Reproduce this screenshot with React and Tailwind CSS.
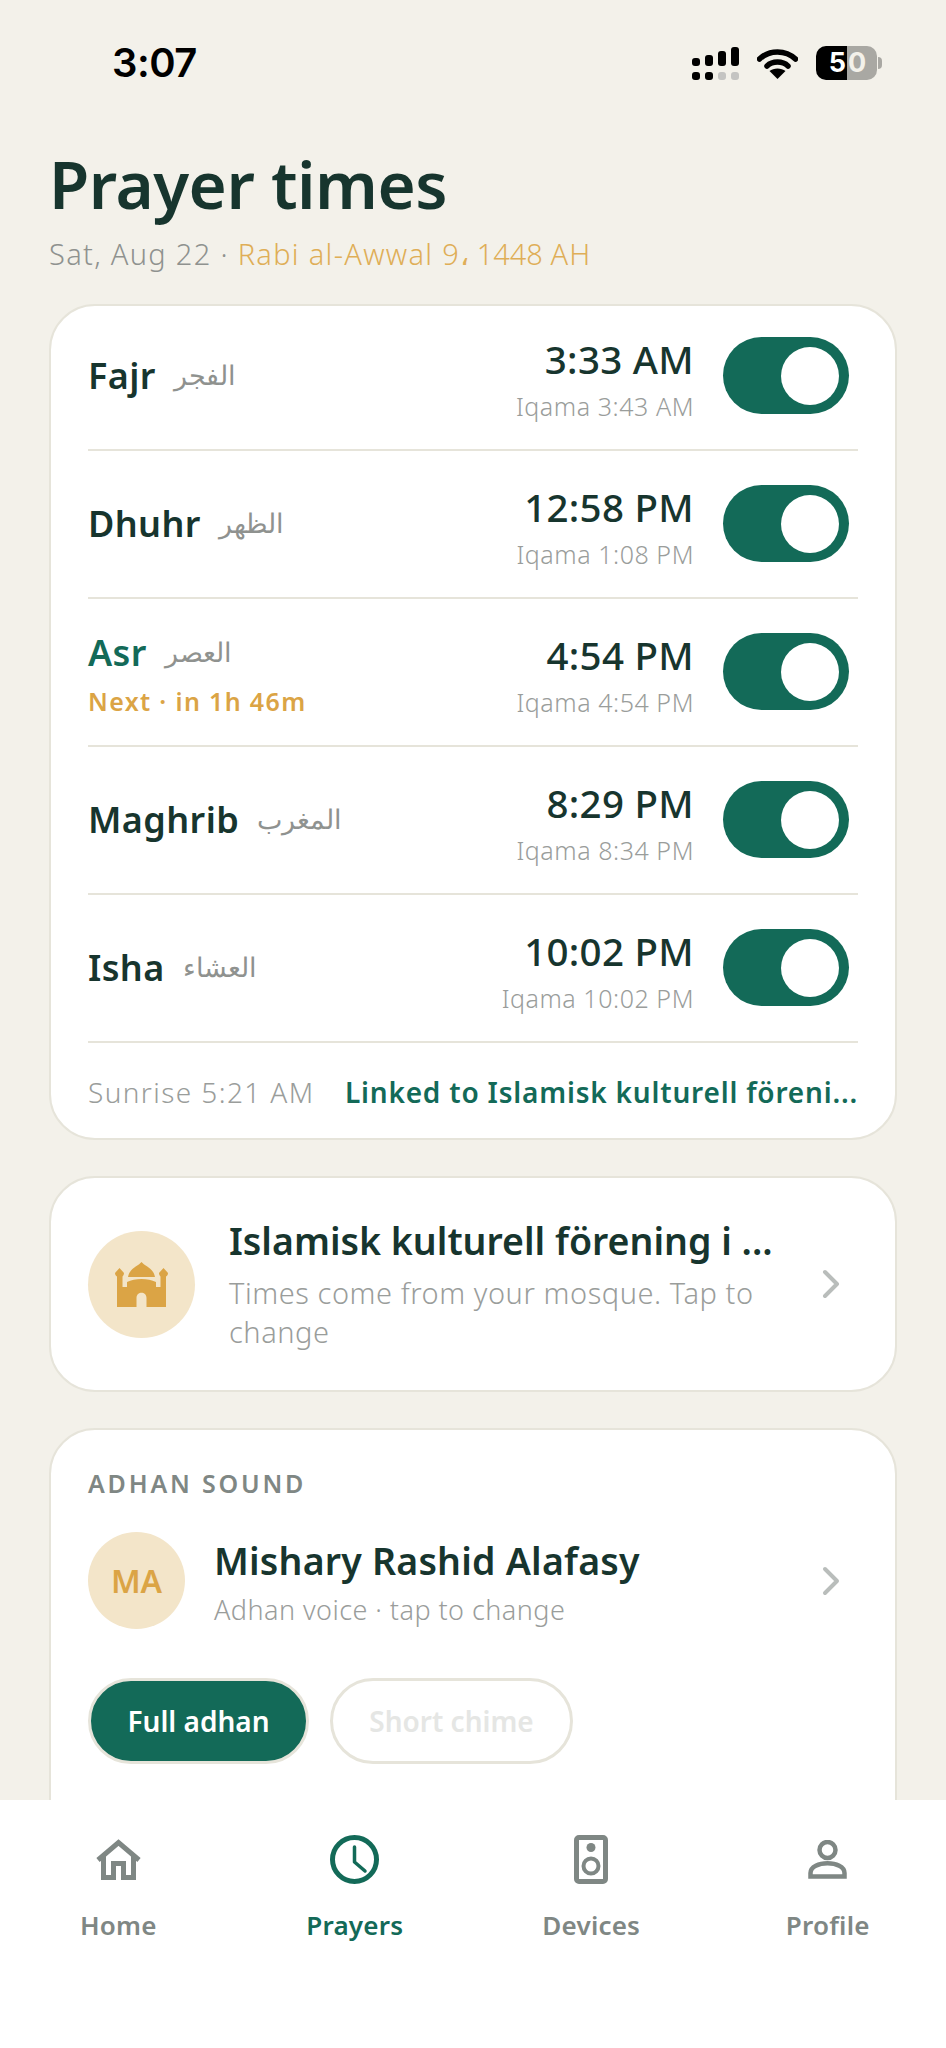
import React from "react";

const prayers = [
  { name: "Fajr", arabic: "الفجر", time: "3:33 AM", iqama: "Iqama 3:43 AM" },
  { name: "Dhuhr", arabic: "الظهر", time: "12:58 PM", iqama: "Iqama 1:08 PM" },
  { name: "Asr", arabic: "العصر", time: "4:54 PM", iqama: "Iqama 4:54 PM", next: "Next · in 1h 46m" },
  { name: "Maghrib", arabic: "المغرب", time: "8:29 PM", iqama: "Iqama 8:34 PM" },
  { name: "Isha", arabic: "العشاء", time: "10:02 PM", iqama: "Iqama 10:02 PM" },
];

function StatusBar() {
  return (
    <div className="flex items-center justify-between h-[34px] mt-[46px] pl-[112px] pr-[64px]">
      <span className="font-['Inter',sans-serif] text-[40px] font-semibold leading-none text-black tracking-[-0.5px]">3:07</span>
      <div className="flex items-center">
        <svg width="47" height="33" viewBox="0 0 47 33" className="mr-[18px]">
          <rect x="0" y="11" width="8" height="8" rx="3" fill="#000" />
          <rect x="13" y="8" width="8" height="11" rx="3" fill="#000" />
          <rect x="26" y="4" width="8" height="15" rx="3" fill="#000" />
          <rect x="39" y="0" width="8" height="19" rx="3" fill="#000" />
          <rect x="0" y="25" width="8" height="8" rx="3" fill="#000" />
          <rect x="13" y="25" width="8" height="8" rx="3" fill="#000" />
          <rect x="26" y="25" width="8" height="8" rx="3" fill="#c4c4c2" />
          <rect x="39" y="25" width="8" height="8" rx="3" fill="#c4c4c2" />
        </svg>
        <svg width="41" height="31" viewBox="0 0 41 31" className="mr-[18px]">
          <path d="M2.5 11 C12.5 1.5 28.5 1.5 38.5 11" fill="none" stroke="#000" strokeWidth="5.5" strokeLinecap="round" />
          <path d="M10 18 C15.5 12.8 25.5 12.8 31 18" fill="none" stroke="#000" strokeWidth="5.5" strokeLinecap="round" />
          <path d="M20.5 31 L12.5 23 C16.5 19.6 24.5 19.6 28.5 23 Z" fill="#000" />
        </svg>
        <div className="flex h-[34px] w-[61px] overflow-hidden rounded-[10px] font-['Inter',sans-serif] text-[27px] font-bold leading-[34px]">
          <span className="w-[31px] bg-black text-white text-right pr-[1px]">5</span>
          <span className="flex-1 bg-[#a9a8a3] text-[#f3f1ea] pl-[1px]">0</span>
        </div>
        <div className="ml-[1px] h-[12px] w-[4px] rounded-r-full bg-[#a9a8a3]" />
      </div>
    </div>
  );
}

function Toggle() {
  return (
    <div className="flex h-[77px] w-[126px] shrink-0 items-center justify-end rounded-full bg-[#136a58] pr-[10px]">
      <div className="h-[58px] w-[58px] rounded-full bg-white" />
    </div>
  );
}

function PrayerRow({ prayer }) {
  const isNext = Boolean(prayer.next);
  return (
    <div className="flex items-start border-b-2 border-[#e6e4da] pb-[35px] pr-[9px]">
      <div className={`flex-1 ${isNext ? "-mt-[2px]" : "self-center"}`}>
        <div className="flex items-center">
          <span className={`text-[36px] font-semibold leading-[44px] tracking-[0.4px] ${isNext ? "text-[#136a58]" : "text-[#17352e]"}`}>
            {prayer.name}
          </span>
          <span dir="rtl" className="ml-[18px] font-['DejaVu_Sans',serif] text-[27px] font-light leading-[44px] text-[#8f928f]">
            {prayer.arabic}
          </span>
        </div>
        {isNext && (
          <div className="mt-[10px] h-[23px] text-[25px] font-semibold leading-[33px] tracking-[1.35px] text-[#dba445]">{prayer.next}</div>
        )}
      </div>
      <div className="mr-[29px] h-[77px] text-right">
        <div className="text-[38.5px] font-medium leading-[44px] tracking-[0.3px] text-[#17352e]">{prayer.time}</div>
        <div className="mt-[9px] text-[25px] font-light leading-[32px] tracking-[0.55px] text-[#9a9d9b]">{prayer.iqama}</div>
      </div>
      <Toggle />
    </div>
  );
}

function Chevron() {
  return (
    <svg width="18" height="30" viewBox="0 0 18 30" className="shrink-0" fill="none" stroke="#b9bdbb" strokeWidth="4" strokeLinecap="round" strokeLinejoin="round">
      <path d="M3 3 L15 15 L3 27" />
    </svg>
  );
}

function MosqueIcon() {
  return (
    <svg width="53" height="45" viewBox="0 0 53 45" fill="#dba445">
      <path d="M26.5 0 C29.5 4 38.5 6 40 15 H13 C14.5 6 23.5 4 26.5 0 Z" />
      <path
        fillRule="evenodd"
        d="M4.5 6 L9 11 C9 13 8 14 7.5 14.5 V25 H12 V20 C20 16 33 16 41 20 V25 H45.5 V14.5 C45 14 44 13 44 11 L48.5 6 L53 11 C53 13 52 14 51 14.5 V45 H2 V14.5 C1 14 0 13 0 11 Z M21.5 45 H31.5 V36 C31.5 29 21.5 29 21.5 36 Z"
      />
    </svg>
  );
}

function NavItem({ label, active, children }) {
  return (
    <div className="flex flex-1 flex-col items-center">
      <div className="flex h-[50px] items-center justify-center">{children}</div>
      <span className={`mt-[24px] text-[26px] font-semibold leading-[34px] tracking-[0.2px] ${active ? "text-[#136a58]" : "text-[#7f8784]"}`}>
        {label}
      </span>
    </div>
  );
}

export default function App() {
  return (
    <div className="flex h-[2048px] w-[946px] flex-col overflow-hidden bg-[#f3f1ea] font-['Noto_Sans',sans-serif]">
      <div className="min-h-0 flex-1 overflow-hidden">
        <StatusBar />

        <div className="px-[49px]">
          <h1 className="mt-[62px] text-[65.5px] font-semibold leading-[84px] tracking-[-0.5px] text-[#17352e]">Prayer times</h1>
          <p className="mt-[8px] text-[29px] font-light leading-[40px] tracking-[1.3px] text-[#8f928f]">
            Sat, Aug 22 · <span className="text-[#dfae57]">Rabi al-Awwal 9، 1448 AH</span>
          </p>

          {/* Prayer list */}
          <section className="mt-[30px] flex flex-col gap-[34px] rounded-[46px] border-2 border-[#e6e4da] bg-white px-[37px] pt-[31px] pb-[31px]">
            {prayers.map((p) => (
              <PrayerRow key={p.name} prayer={p} />
            ))}
            <div className="flex items-center justify-between leading-[30px]">
              <span className="text-[28px] font-light tracking-[1.4px] text-[#9a9d9b]">Sunrise 5:21 AM</span>
              <span className="text-[28px] font-semibold tracking-[0.8px] text-[#136a58]">Linked to Islamisk kulturell föreni...</span>
            </div>
          </section>

          {/* Mosque */}
          <section className="mt-[36px] flex h-[216px] items-center rounded-[46px] border-2 border-[#e6e4da] bg-white pl-[37px] pr-[55px]">
            <div className="flex h-[107px] w-[107px] shrink-0 items-center justify-center rounded-full bg-[#f3e5c9]">
              <MosqueIcon />
            </div>
            <div className="ml-[34px] flex-1">
              <div className="text-[37.5px] font-semibold leading-[48px] text-[#17352e]">Islamisk kulturell förening i ...</div>
              <div className="mt-[8px] text-[29px] font-light leading-[39px] tracking-[0.55px] text-[#9a9d9b]">
                Times come from your mosque. Tap to<br />change
              </div>
            </div>
            <Chevron />
          </section>

          {/* Adhan sound */}
          <section className="mt-[36px] h-[500px] rounded-[46px] border-2 border-[#e6e4da] bg-white pl-[37px] pr-[55px] pt-[36px]">
            <div className="text-[25px] font-semibold leading-[34px] tracking-[2.8px] text-[#7f8784]">ADHAN SOUND</div>
            <div className="mt-[32px] flex items-center">
              <div className="flex h-[97px] w-[97px] shrink-0 items-center justify-center rounded-full bg-[#f3e5c9] text-[32px] font-semibold text-[#dba445]">
                MA
              </div>
              <div className="ml-[29px] flex-1 pt-[4px]">
                <div className="text-[37.5px] font-semibold leading-[48px] tracking-[0.2px] text-[#17352e]">Mishary Rashid Alafasy</div>
                <div className="mt-[6px] text-[27px] font-light leading-[38px] tracking-[0.45px] text-[#9a9d9b]">Adhan voice · tap to change</div>
              </div>
              <Chevron />
            </div>
            <div className="mt-[49px] flex gap-[21px]">
              <div className="flex h-[86px] w-[221px] items-center justify-center rounded-full border-[3px] border-[#e6e4da] bg-[#136a58] text-[28px] font-semibold text-white">
                Full adhan
              </div>
              <div className="flex h-[86px] w-[243px] items-center justify-center rounded-full border-[3px] border-[#e6e4da] bg-white text-[28px] font-semibold text-[#e5e6e4]">
                Short chime
              </div>
            </div>
          </section>
        </div>
      </div>

      {/* Bottom nav */}
      <nav className="flex h-[248px] shrink-0 bg-white pt-[34px]">
        <NavItem label="Home">
          <svg width="47" height="41" viewBox="0 0 47 41" fill="none" stroke="#7f8784" strokeWidth="5">
            <path d="M3 21 L23.5 3.5 L44 21 M8.5 17 V38.5 H18.5 V24.5 H28.5 V38.5 H38.5 V17" />
          </svg>
        </NavItem>
        <NavItem label="Prayers" active>
          <svg width="49" height="49" viewBox="0 0 49 49" fill="none" stroke="#136a58" strokeLinecap="round">
            <circle cx="24.5" cy="24.5" r="22" strokeWidth="5" />
            <path d="M24.5 12 V27 L35 36" strokeWidth="3.5" strokeLinejoin="round" />
          </svg>
        </NavItem>
        <NavItem label="Devices">
          <svg width="34" height="49" viewBox="0 0 34 49" fill="none" stroke="#7f8784">
            <rect x="2.5" y="2.5" width="29" height="44" rx="2.5" strokeWidth="5" />
            <circle cx="17" cy="12.5" r="4.5" fill="#7f8784" stroke="none" />
            <circle cx="17" cy="31" r="7.5" strokeWidth="4" />
          </svg>
        </NavItem>
        <NavItem label="Profile">
          <svg width="39" height="39" viewBox="0 0 39 39" fill="none" stroke="#7f8784" strokeWidth="4.5">
            <ellipse cx="19.5" cy="10" rx="8" ry="8" />
            <path d="M2.5 36.5 V33 C2.5 20 36.5 20 36.5 33 V36.5 Z" />
          </svg>
        </NavItem>
      </nav>
    </div>
  );
}
